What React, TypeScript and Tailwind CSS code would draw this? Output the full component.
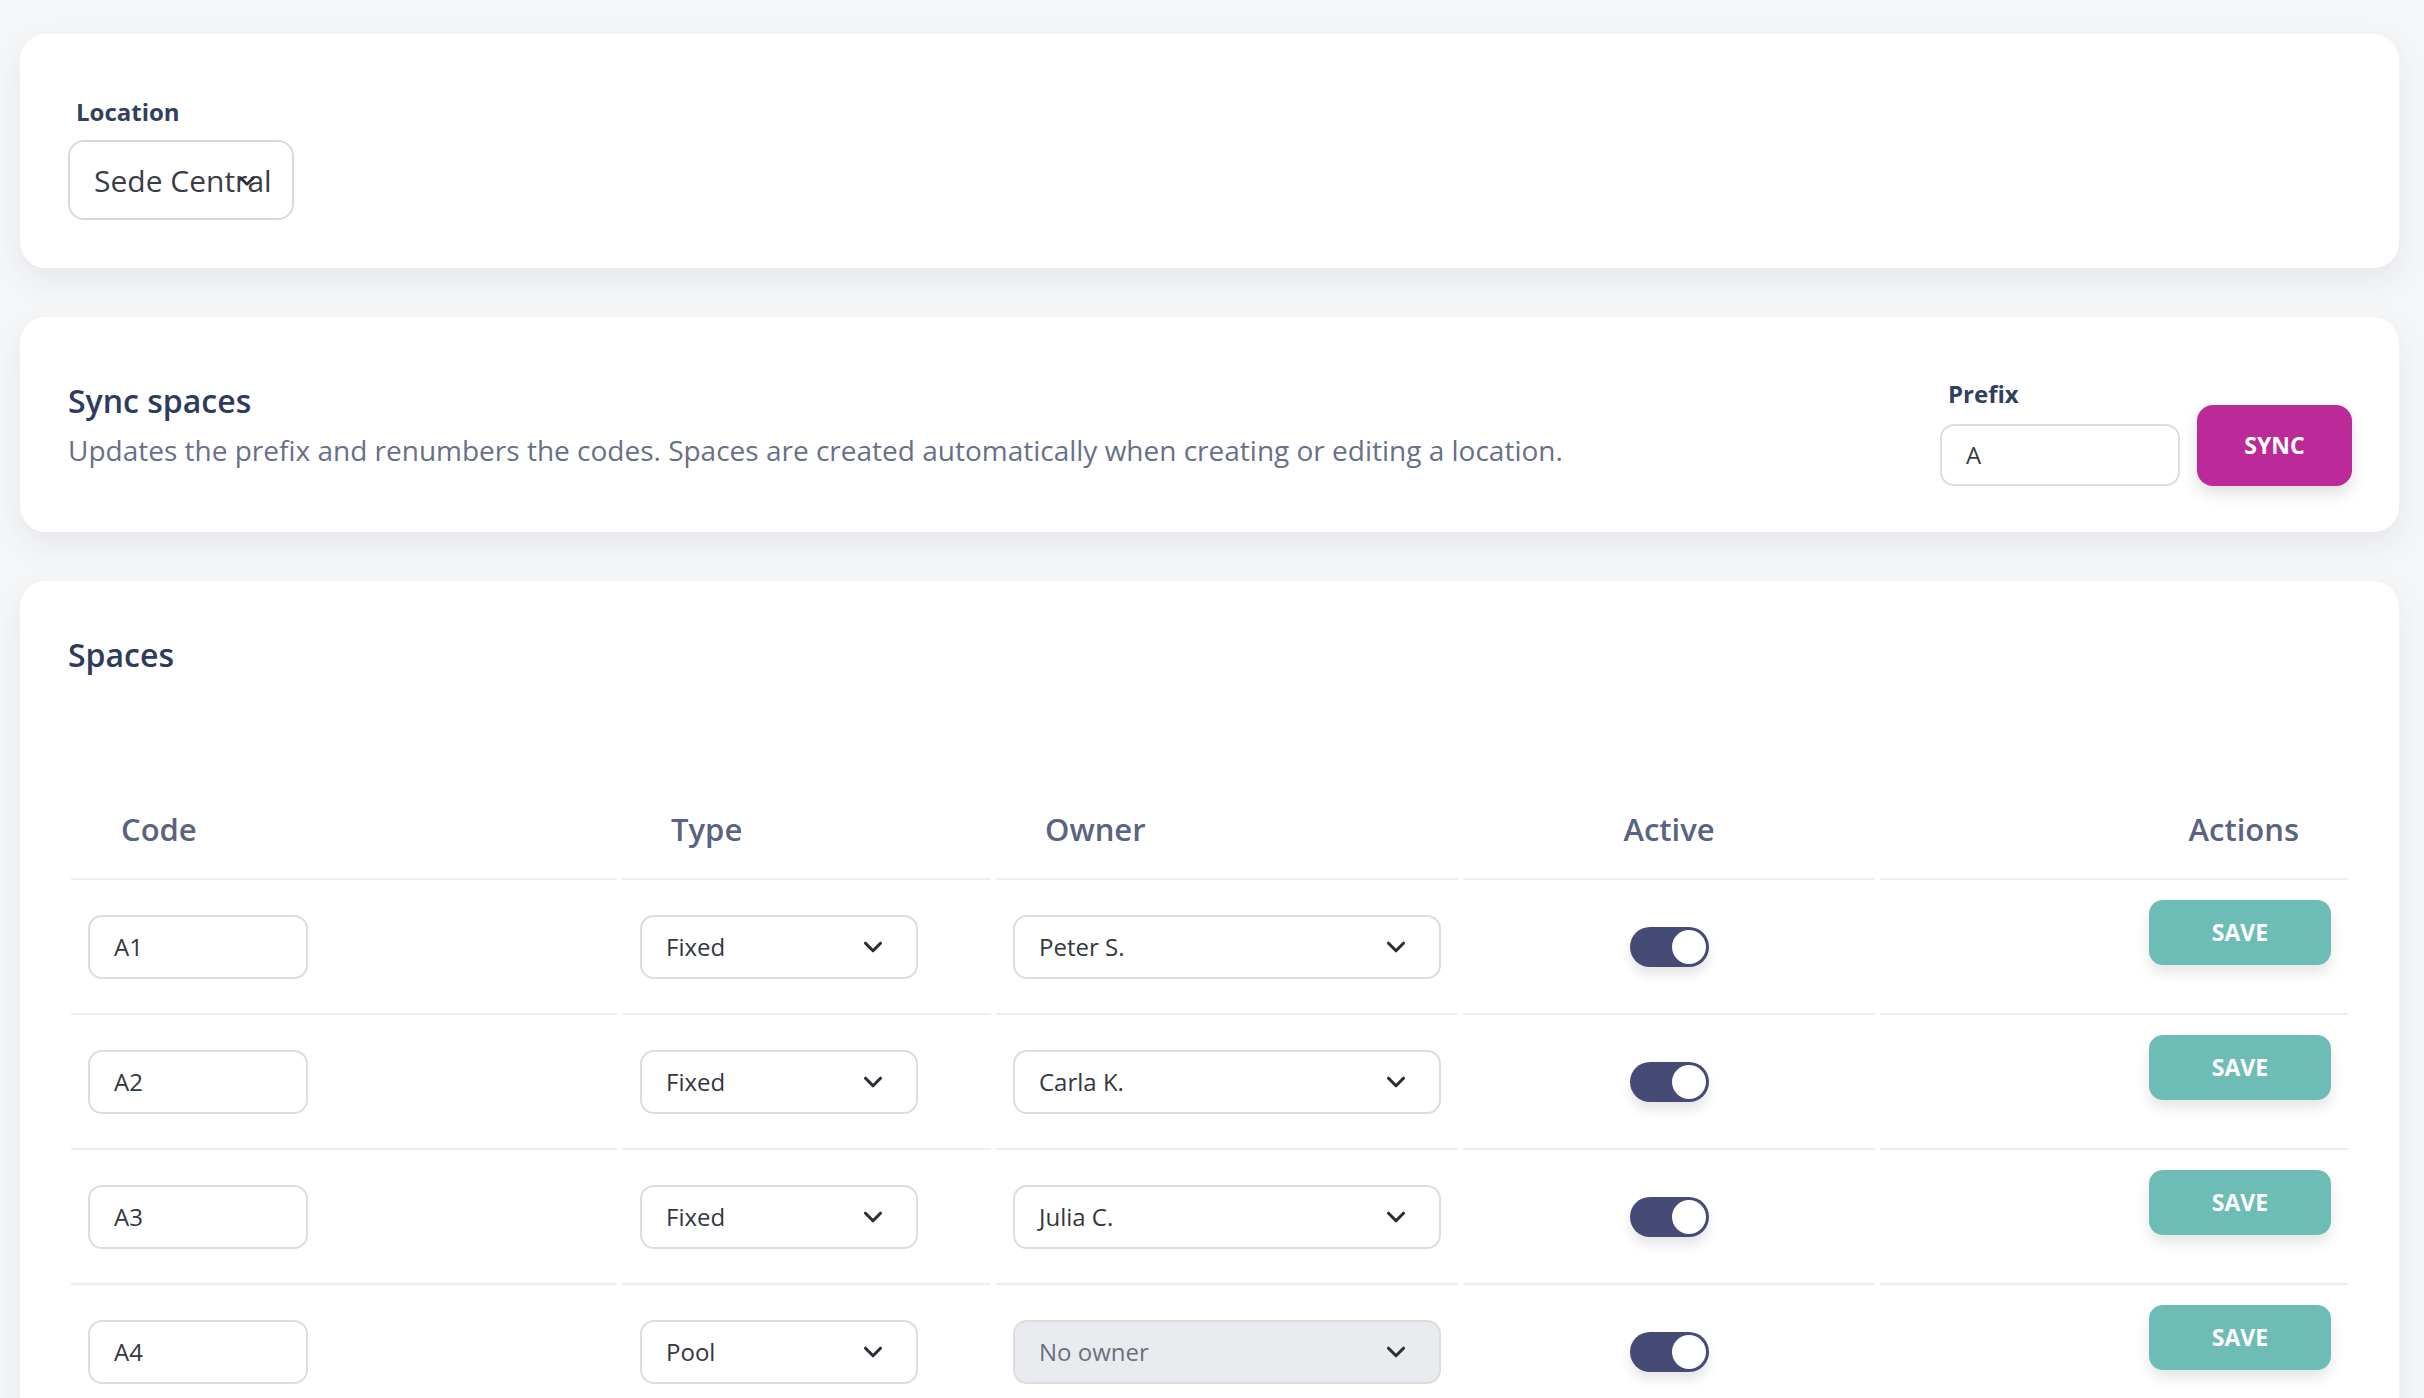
import { ChevronDown } from "lucide-react";

const rows = [
  { code: "A1", type: "Fixed", owner: "Peter S." },
  { code: "A2", type: "Fixed", owner: "Carla K." },
  { code: "A3", type: "Fixed", owner: "Julia C." },
  { code: "A4", type: "Pool", owner: "No owner" },
];

function SelectBox({ value, width, disabled }: { value: string; width: string; disabled?: boolean }) {
  return (
    <div
      className={`${width} h-[64px] flex items-center justify-between pl-[24px] pr-[28px] rounded-[14px] border-2 border-[#dadde2] text-[24px] ${
        disabled ? "bg-[#e9ebef] text-[#6b7080]" : "bg-white text-[#333740]"
      }`}
    >
      <span>{value}</span>
      <ChevronDown className="w-[30px] h-[30px] text-[#2b2e35]" strokeWidth={2.5} />
    </div>
  );
}

export default function App() {
  return (
    <div className="min-h-screen bg-[#f5f6f8] pl-[20px] pr-[25px] pt-[34px] font-['Open_Sans',sans-serif] flex flex-col gap-[49px]">
      {/* Location */}
      <section className="bg-white rounded-[26px] shadow-[0_12px_30px_rgba(30,40,60,0.07)] pl-[48px] pt-[60px] pb-[48px]">
        <label className="block pl-[8px] mb-[10px] text-[24px] font-bold text-[#32405f]">Location</label>
        <div className="relative w-[226px] h-[80px] rounded-[16px] border-2 border-[#d7dade] flex items-center pl-[24px] text-[30px] text-[#3a3d44] whitespace-nowrap">
          Sede Central
          <ChevronDown className="absolute left-[164px] top-[26px] w-[26px] h-[26px] text-[#2b2e35]" strokeWidth={2.5} />
        </div>
      </section>

      {/* Sync spaces */}
      <section className="bg-white rounded-[26px] shadow-[0_12px_30px_rgba(30,40,60,0.07)] h-[215px] pl-[48px] pr-[47px] flex items-center justify-between">
        <div className="flex flex-col gap-[12px]">
          <h2 className="text-[32px] font-semibold text-[#2f3b5c] leading-tight">Sync spaces</h2>
          <p className="text-[28px] text-[#687089] leading-tight">
            Updates the prefix and renumbers the codes. Spaces are created automatically when creating or editing a location.
          </p>
        </div>
        <div className="flex items-end gap-[17px] pt-[12px]">
          <div className="flex flex-col">
            <label className="pl-[8px] mb-[12px] text-[24px] font-bold text-[#32405f]">Prefix</label>
            <div className="w-[240px] h-[62px] rounded-[14px] border-2 border-[#dadde2] flex items-center pl-[24px] text-[24px] text-[#3a3d44]">
              A
            </div>
          </div>
          <button className="w-[155px] h-[81px] rounded-[16px] bg-[#bb2a98] text-white text-[23px] font-bold shadow-[0_8px_16px_rgba(0,0,0,0.12)]">
            SYNC
          </button>
        </div>
      </section>

      {/* Spaces */}
      <section className="bg-white rounded-[26px] shadow-[0_12px_30px_rgba(30,40,60,0.07)] pt-[54px] pl-[51px] pr-[51px] pb-[40px]">
        <h2 className="-ml-[3px] text-[32px] font-semibold text-[#2f3b5c] leading-tight">Spaces</h2>

        <div className="mt-[105px] grid grid-cols-[546px_369px_462px_412px_468px] gap-x-[5px] text-[#5a6380]">
          <div className="h-[100px] flex items-center pl-[50px] border-b-2 border-[#eceef2] text-[31px] font-semibold">Code</div>
          <div className="h-[100px] flex items-center pl-[49px] border-b-2 border-[#eceef2] text-[31px] font-semibold">Type</div>
          <div className="h-[100px] flex items-center pl-[49px] border-b-2 border-[#eceef2] text-[31px] font-semibold">Owner</div>
          <div className="h-[100px] flex items-center justify-center border-b-2 border-[#eceef2] text-[31px] font-semibold">Active</div>
          <div className="h-[100px] flex items-center justify-end pr-[49px] border-b-2 border-[#eceef2] text-[31px] font-semibold">Actions</div>

          {rows.map((r) => (
            <div key={r.code} className="contents">
              <div className="h-[135px] flex items-center pl-[17px] border-b-2 border-[#eceef2]">
                <div className="w-[220px] h-[64px] rounded-[14px] border-2 border-[#dadde2] flex items-center pl-[24px] text-[24px] text-[#333740]">
                  {r.code}
                </div>
              </div>
              <div className="h-[135px] flex items-center pl-[18px] border-b-2 border-[#eceef2]">
                <SelectBox value={r.type} width="w-[278px]" />
              </div>
              <div className="h-[135px] flex items-center pl-[17px] border-b-2 border-[#eceef2]">
                <SelectBox value={r.owner} width="w-[428px]" disabled={r.owner === "No owner"} />
              </div>
              <div className="h-[135px] flex items-center justify-center border-b-2 border-[#eceef2]">
                <div className="w-[79px] h-[40px] rounded-full bg-[#454b75] flex items-center justify-end pr-[3px] shadow-[0_8px_12px_rgba(0,0,0,0.1)]">
                  <div className="w-[34px] h-[34px] rounded-full bg-white" />
                </div>
              </div>
              <div className="h-[135px] flex items-center justify-end pr-[17px] border-b-2 border-[#eceef2]">
                <button className="mb-[28px] w-[182px] h-[65px] rounded-[14px] bg-[#6dbcb5] text-white text-[23px] font-bold shadow-[0_8px_14px_rgba(0,0,0,0.1)]">
                  SAVE
                </button>
              </div>
            </div>
          ))}
        </div>
      </section>
    </div>
  );
}
